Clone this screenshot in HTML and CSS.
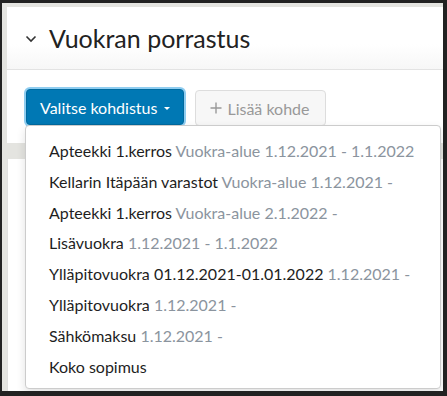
FILE: index.html
```html
<!DOCTYPE html>
<html lang="fi">
<head>
    <meta charset="UTF-8">
    <title>Vuokran porrastus</title>
    <link rel="stylesheet" href="styles.css">
</head>
<body>
    <div class="page">
        <div class="panel">
            <div class="panel-header">
                <svg class="chevron" width="12" height="8" viewBox="0 0 12 8"><path d="M1.5 1.5 L6 6 L10.5 1.5" fill="none" stroke="#333" stroke-width="1.6"/></svg>
                <h2>Vuokran porrastus</h2>
            </div>
            <div class="panel-body">
                <div class="actions">
                    <button class="btn btn-primary">Valitse kohdistus <span class="caret"></span></button>
                    <button class="btn btn-default" disabled>
                        <svg width="12" height="12" viewBox="0 0 12 12"><path d="M6 0.5 V11.5 M0.5 6 H11.5" stroke="#999" stroke-width="1.4"/></svg>
                        Lisää kohde
                    </button>

                    <!-- Avattu valikko -->
                    <ul class="dropdown">
                        <li>Apteekki 1.kerros <span class="muted">Vuokra-alue 1.12.2021 - 1.1.2022</span></li>
                        <li>Kellarin Itäpään varastot <span class="muted">Vuokra-alue 1.12.2021 -</span></li>
                        <li>Apteekki 1.kerros <span class="muted">Vuokra-alue 2.1.2022 -</span></li>
                        <li>Lisävuokra <span class="muted">1.12.2021 - 1.1.2022</span></li>
                        <li>Ylläpitovuokra 01.12.2021-01.01.2022 <span class="muted">1.12.2021 -</span></li>
                        <li>Ylläpitovuokra <span class="muted">1.12.2021 -</span></li>
                        <li>Sähkömaksu <span class="muted">1.12.2021 -</span></li>
                        <li>Koko sopimus</li>
                    </ul>
                </div>
            </div>
        </div>
        <div class="panel panel-next"></div>
    </div>
</body>
</html>
```

FILE: styles.css
```css
body {
    margin: 0;
    background-color: #222;
    font-family: Lato, "Open Sans", sans-serif;
    color: #222;
    height: 396px;
    overflow: hidden;
}
.page {
    margin: 3px 4px 0 2px;
    padding: 4px 0 0 5px;
    height: 384px; /* s'arrête à 391px */
    background-color: #e4e4e0;
    overflow: hidden;
}
.panel {
    background-color: #fff;
}
.panel-header {
    height: 62px;
    display: flex;
    align-items: center;
    padding-left: 18px;
    border-bottom: 1px solid #e3e3e3;
    background: linear-gradient(#fff 60%, #f7f7f7);
}
.chevron {
    margin-right: 12px;
    margin-top: 2px;
}
.panel-header h2 {
    margin: 0;
    font-size: 25px;
    font-weight: normal;
    color: #222;
}
.panel-body {
    padding: 18px 0 17px 17px;
}
.actions {
    position: relative;
    display: flex;
    align-items: flex-start;
    gap: 11px;
}
.btn {
    font-family: inherit;
    font-size: 16px;
    height: 36px;
    border-radius: 4px;
    padding: 0 13px;
    display: flex;
    align-items: center;
    gap: 5px;
}
.btn-primary {
    background-color: #0078b4;
    color: #fff;
    border: 1px solid #006a9f;
    box-shadow: 0 0 0 2px #8fcdf0;
    margin-left: 2px;
    margin-top: 1px;
}
.caret {
    width: 0;
    height: 0;
    border-left: 3px solid transparent;
    border-right: 3px solid transparent;
    border-top: 3px solid #fff;
    margin-left: 2px;
    margin-top: 2px;
}
.btn-default {
    background-color: #f7f7f7;
    color: #999;
    border: 1px solid #ddd;
    margin-top: 2px;
    padding: 0 15px 0 14px;
}
.dropdown {
    position: absolute;
    top: 37px;
    left: 1px;
    width: 414px;
    margin: 0;
    padding: 10px 0 6px;
    list-style: none;
    background-color: #fff;
    border: 1px solid #ccc;
    border-radius: 4px;
    box-shadow: 0 4px 10px rgba(0, 0, 0, 0.12);
    z-index: 2;
}
.dropdown li {
    padding: 0 23px;
    font-size: 16px;
    line-height: 30.8px;
    white-space: nowrap;
    color: #1e1e1e;
}
.muted {
    color: #8b949e;
}
.panel-next {
    margin-top: 16px;
    height: 300px;
    border-left: 1px solid #e0e0e0;
}
```
